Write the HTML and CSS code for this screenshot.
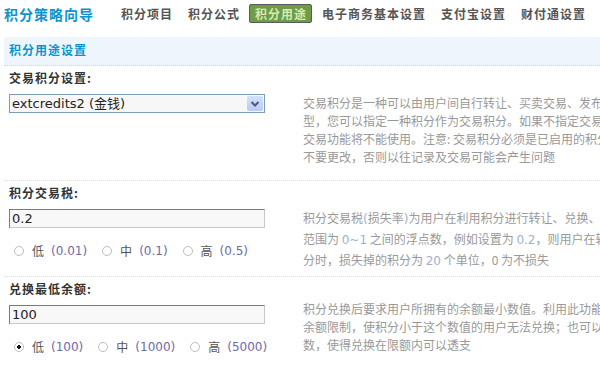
FILE: index.html
```html
<!DOCTYPE html>
<html lang="zh-CN">
<head>
    <meta charset="UTF-8" />
    <title>积分策略向导</title>
    <link rel="stylesheet" href="styles.css">
</head>
<body>

    <div class="topbar">
        <h1 class="logo">积分策略向导</h1>
        <ul class="nav">
            <li><a href="#">积分项目</a></li>
            <li><a href="#">积分公式</a></li>
            <li class="current"><a href="#">积分用途</a></li>
            <li><a href="#">电子商务基本设置</a></li>
            <li><a href="#">支付宝设置</a></li>
            <li><a href="#">财付通设置</a></li>
        </ul>
    </div>

    <div class="panel">
        <h3 class="panel-title">积分用途设置</h3>

        <div class="setting">
            <div class="setting-label">交易积分设置:</div>
            <div class="setting-body">
                <div class="field">
                    <div class="select-box">
                        <select class="select">
                            <option>extcredits2 (金钱)</option>
                        </select>
                        <span class="select-arrow">
                            <svg width="10" height="8" viewBox="0 0 10 8"><path d="M1.5 2 L5 5.5 L8.5 2" fill="none" stroke="#4b5b7e" stroke-width="2"/></svg>
                        </span>
                    </div>
                </div>
                <div class="tips">
                    交易积分是一种可以由用户间自行转让、买卖交易、发布悬赏主题的积分类<br>
                    型，您可以指定一种积分作为交易积分。如果不指定交易积分，则用户间积分<br>
                    交易功能将不能使用。注意: 交易积分必须是已启用的积分，一旦确定请尽量<br>
                    不要更改，否则以往记录及交易可能会产生问题
                </div>
            </div>
        </div>

        <div class="setting">
            <div class="setting-label">积分交易税:</div>
            <div class="setting-body">
                <div class="field">
                    <input type="text" class="text-input" value="0.2" />
                    <div class="options">
                        <label class="opt"><input type="radio" name="tax" />低<span class="num">(0.01)</span></label>
                        <label class="opt"><input type="radio" name="tax" />中<span class="num">(0.1)</span></label>
                        <label class="opt"><input type="radio" name="tax" />高<span class="num">(0.5)</span></label>
                    </div>
                </div>
                <div class="tips tips-loose">
                    积分交易税<span class="num">(</span>损失率<span class="num">)</span>为用户在利用积分进行转让、兑换、买卖时扣除的税率，<br>
                    范围为 <span class="num">0~1</span> 之间的浮点数，例如设置为 <span class="num">0.2</span>，则用户在转换 100 单位积<br>
                    分时，损失掉的积分为 <span class="num">20</span> 个单位，0 为不损失
                </div>
            </div>
        </div>

        <div class="setting">
            <div class="setting-label">兑换最低余额:</div>
            <div class="setting-body">
                <div class="field">
                    <input type="text" class="text-input" value="100" />
                    <div class="options">
                        <label class="opt"><input type="radio" name="min" checked />低<span class="num">(100)</span></label>
                        <label class="opt"><input type="radio" name="min" />中<span class="num">(1000)</span></label>
                        <label class="opt"><input type="radio" name="min" />高<span class="num">(5000)</span></label>
                    </div>
                </div>
                <div class="tips tips-raised">
                    积分兑换后要求用户所拥有的余额最小数值。利用此功能，您可以设置较高的<br>
                    余额限制，使积分小于这个数值的用户无法兑换；也可以将余额限制设置为负<br>
                    数，使得兑换在限额内可以透支
                </div>
            </div>
        </div>
    </div>

</body>
</html>
```

FILE: styles.css
```css
* {
    box-sizing: border-box;
}

body {
    margin: 0;
    overflow: hidden;
    background-color: #fff;
    font-family: "Noto Sans CJK SC", sans-serif;
    font-size: 12px;
    color: #333;
}

/* header */
.topbar {
    display: flex;
    align-items: center;
    padding: 4px 4px;
    height: 27px;
}

.logo {
    margin: 0;
    font-size: 14px;
    line-height: 18px;
    letter-spacing: 1px;
    font-weight: bold;
    color: #0a95cf;
    white-space: nowrap;
}

.nav {
    display: flex;
    gap: 4px;
    list-style: none;
    margin: 0 0 0 21px;
    padding: 0;
}

.nav a {
    display: block;
    padding: 0 4px 0 5px;
    height: 19px;
    line-height: 17px;
    border: 1px solid transparent;
    border-radius: 2px;
    font-size: 12px;
    font-weight: bold;
    letter-spacing: 1px;
    color: #555;
    text-decoration: none;
    white-space: nowrap;
}

.nav .current a {
    background-color: #6f9b4b;
    border-color: #5a5a5a;
    color: #d4ecae;
}

/* panel */
.panel {
    margin: 10px 0 0 4px;
}

.panel-title {
    margin: 0;
    padding: 4px 5px 6px;
    line-height: 18px;
    background-color: #eef5fc;
    border-bottom: 1px dotted #c5d9ea;
    font-size: 12px;
    letter-spacing: 1px;
    color: #0a95cf;
}

.setting {
    padding: 3px 0 14px 5px;
    border-bottom: 1px dotted #cfdfee;
}

.setting-label {
    line-height: 18px;
    font-weight: bold;
    letter-spacing: 1px;
    color: #333;
}

.setting-body {
    display: flex;
    align-items: flex-start;
    margin-top: 7px;
}

.field {
    flex: 0 0 294px;
}

.select-box {
    display: flex;
    align-items: center;
    width: 256px;
    height: 19px;
    border: 1px solid #7f9db9;
    background-color: #f7f7f7;
}

.select {
    flex: 1;
    appearance: none;
    -webkit-appearance: none;
    border: none;
    background: transparent;
    padding: 0 2px;
    height: 17px;
    font-family: "DejaVu Sans", "Noto Sans CJK SC", sans-serif;
    font-size: 13px;
    color: #222;
    outline: none;
}

.select-arrow {
    display: flex;
    align-items: center;
    justify-content: center;
    width: 16px;
    height: 15px;
    margin-right: 1px;
    border-radius: 2px;
    background: linear-gradient(#d3e1fc, #b7cbf6);
}

.text-input {
    display: block;
    width: 256px;
    height: 19px;
    padding: 0 2px;
    border: 1px solid;
    border-color: #7a7a7a #c8c8c8 #c8c8c8 #7a7a7a;
    background-color: #f8f8f8;
    font-family: "DejaVu Sans", "Noto Sans CJK SC", sans-serif;
    font-size: 13px;
    color: #222;
}

.options {
    display: flex;
    margin-top: 14px;
    line-height: 18px;
}

.opt {
    display: inline-flex;
    align-items: center;
    margin-right: 10px;
    color: #555;
    white-space: nowrap;
}

.opt input {
    appearance: none;
    -webkit-appearance: none;
    width: 10px;
    height: 10px;
    margin: 0 8px 0 5px;
    border: 1px solid #bdbdbd;
    border-radius: 50%;
    background-color: #fff;
}

.opt input:checked {
    background: radial-gradient(circle, #111 0 1.6px, #fff 2px);
}

.opt .num {
    margin-left: 7px;
}

.num {
    font-family: "DejaVu Sans", sans-serif;
    color: #6d6aa8;
}

.tips {
    line-height: 18px;
    color: #999;
    white-space: nowrap;
}

.tips .num {
    color: #9fb0cf;
}

.tips-loose {
    line-height: 20px;
    margin: -1px 0 -9px;
}

.tips-raised {
    margin-top: -5px;
}
```
